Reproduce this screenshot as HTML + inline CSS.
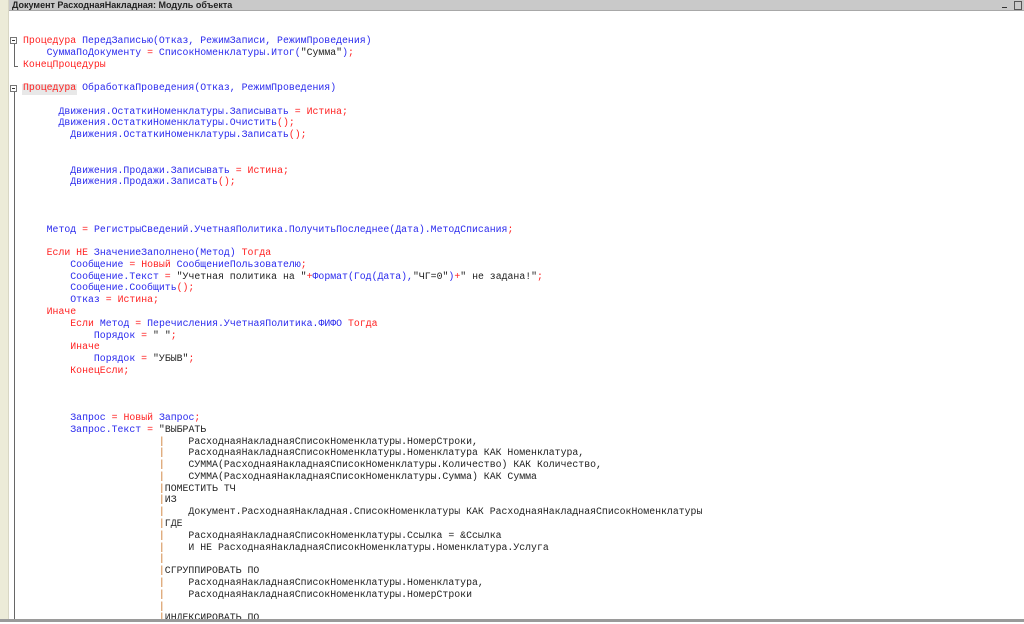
<!DOCTYPE html>
<html><head><meta charset="utf-8"><style>
html,body{margin:0;padding:0;width:1024px;height:622px;overflow:hidden;background:#fff;}
.strip{position:absolute;left:0;top:0;width:8px;height:622px;background:#ecebd8;border-right:1px solid #d8d6c4;}
.title{position:absolute;left:9px;top:0;width:1015px;height:11px;background:#c9c9c9;border-bottom:1px solid #a8a8a8;font:bold 9px "Liberation Sans","DejaVu Sans",sans-serif;color:#222;line-height:11px;padding-left:3px;box-sizing:border-box;}
.btn1{position:absolute;left:1002px;top:7px;width:5px;height:1px;background:#333;}
.btn2{position:absolute;left:1014px;top:1px;width:6px;height:7px;border:1px solid #555;}
.bottom{position:absolute;left:0;top:619px;width:1024px;height:3px;background:#9a9a9a;}
pre{position:absolute;left:23px;top:35px;margin:0;font:9.85px/11.78px "Liberation Mono","DejaVu Sans Mono",monospace;color:#222;}
.k{color:#f22}.i{color:#2a2aee}.p{color:#c87020}
.fold{position:absolute;left:14px;width:1px;background:#666;}
.box{position:absolute;left:10px;width:7px;height:7px;border:1px solid #777;background:#fff;box-sizing:border-box;}
.box:after{content:"";position:absolute;left:1px;top:2px;width:3px;height:1px;background:#333;}
.end{position:absolute;left:14px;width:4px;height:1px;background:#666;}
.hl{position:absolute;left:22px;top:84px;width:55px;height:11px;background:#e8e8e8;}
</style></head><body>
<div class="strip"></div>
<div class="title">Документ РасходнаяНакладная: Модуль объекта</div>
<div class="btn1"></div><div class="btn2"></div>
<div class="hl"></div>
<div class="fold" style="top:44px;height:22px"></div>
<div class="end" style="top:66px"></div>
<div class="box" style="top:37px"></div>
<div class="fold" style="top:92px;height:530px"></div>
<div class="box" style="top:85px"></div>
<pre><span class="k">Процедура</span> <span class="i">ПередЗаписью(Отказ, РежимЗаписи, РежимПроведения)</span>
    <span class="i">СуммаПоДокументу</span> <span class="k">=</span> <span class="i">СписокНоменклатуры.Итог(</span>"Сумма"<span class="i">)</span><span class="k">;</span>
<span class="k">КонецПроцедуры</span>

<span class="k">Процедура</span> <span class="i">ОбработкаПроведения(Отказ, РежимПроведения)</span>

      <span class="i">Движения.ОстаткиНоменклатуры.Записывать</span> <span class="k">=</span> <span class="k">Истина;</span>
      <span class="i">Движения.ОстаткиНоменклатуры.Очистить</span><span class="k">();</span>
        <span class="i">Движения.ОстаткиНоменклатуры.Записать</span><span class="k">();</span>


        <span class="i">Движения.Продажи.Записывать</span> <span class="k">=</span> <span class="k">Истина;</span>
        <span class="i">Движения.Продажи.Записать</span><span class="k">();</span>



    <span class="i">Метод</span> <span class="k">=</span> <span class="i">РегистрыСведений.УчетнаяПолитика.ПолучитьПоследнее(Дата).МетодСписания</span><span class="k">;</span>

    <span class="k">Если НЕ</span> <span class="i">ЗначениеЗаполнено(Метод)</span> <span class="k">Тогда</span>
        <span class="i">Сообщение</span> <span class="k">=</span> <span class="k">Новый</span> <span class="i">СообщениеПользователю</span><span class="k">;</span>
        <span class="i">Сообщение.Текст</span> <span class="k">=</span> "Учетная политика на "<span class="k">+</span><span class="i">Формат(Год(Дата),</span>"ЧГ=0"<span class="i">)</span><span class="k">+</span>" не задана!"<span class="k">;</span>
        <span class="i">Сообщение.Сообщить</span><span class="k">();</span>
        <span class="i">Отказ</span> <span class="k">=</span> <span class="k">Истина;</span>
    <span class="k">Иначе</span>
        <span class="k">Если</span> <span class="i">Метод</span> <span class="k">=</span> <span class="i">Перечисления.УчетнаяПолитика.ФИФО</span> <span class="k">Тогда</span>
            <span class="i">Порядок</span> <span class="k">=</span> " "<span class="k">;</span>
        <span class="k">Иначе</span>
            <span class="i">Порядок</span> <span class="k">=</span> "УБЫВ"<span class="k">;</span>
        <span class="k">КонецЕсли;</span>



        <span class="i">Запрос</span> <span class="k">=</span> <span class="k">Новый</span> <span class="i">Запрос</span><span class="k">;</span>
        <span class="i">Запрос.Текст</span> <span class="k">=</span> "ВЫБРАТЬ
                       <span class="p">|</span>    РасходнаяНакладнаяСписокНоменклатуры.НомерСтроки,
                       <span class="p">|</span>    РасходнаяНакладнаяСписокНоменклатуры.Номенклатура КАК Номенклатура,
                       <span class="p">|</span>    СУММА(РасходнаяНакладнаяСписокНоменклатуры.Количество) КАК Количество,
                       <span class="p">|</span>    СУММА(РасходнаяНакладнаяСписокНоменклатуры.Сумма) КАК Сумма
                       <span class="p">|</span>ПОМЕСТИТЬ ТЧ
                       <span class="p">|</span>ИЗ
                       <span class="p">|</span>    Документ.РасходнаяНакладная.СписокНоменклатуры КАК РасходнаяНакладнаяСписокНоменклатуры
                       <span class="p">|</span>ГДЕ
                       <span class="p">|</span>    РасходнаяНакладнаяСписокНоменклатуры.Ссылка = &amp;Ссылка
                       <span class="p">|</span>    И НЕ РасходнаяНакладнаяСписокНоменклатуры.Номенклатура.Услуга
                       <span class="p">|</span>
                       <span class="p">|</span>СГРУППИРОВАТЬ ПО
                       <span class="p">|</span>    РасходнаяНакладнаяСписокНоменклатуры.Номенклатура,
                       <span class="p">|</span>    РасходнаяНакладнаяСписокНоменклатуры.НомерСтроки
                       <span class="p">|</span>
                       <span class="p">|</span>ИНДЕКСИРОВАТЬ ПО</pre>
<div class="bottom"></div>
</body></html>
